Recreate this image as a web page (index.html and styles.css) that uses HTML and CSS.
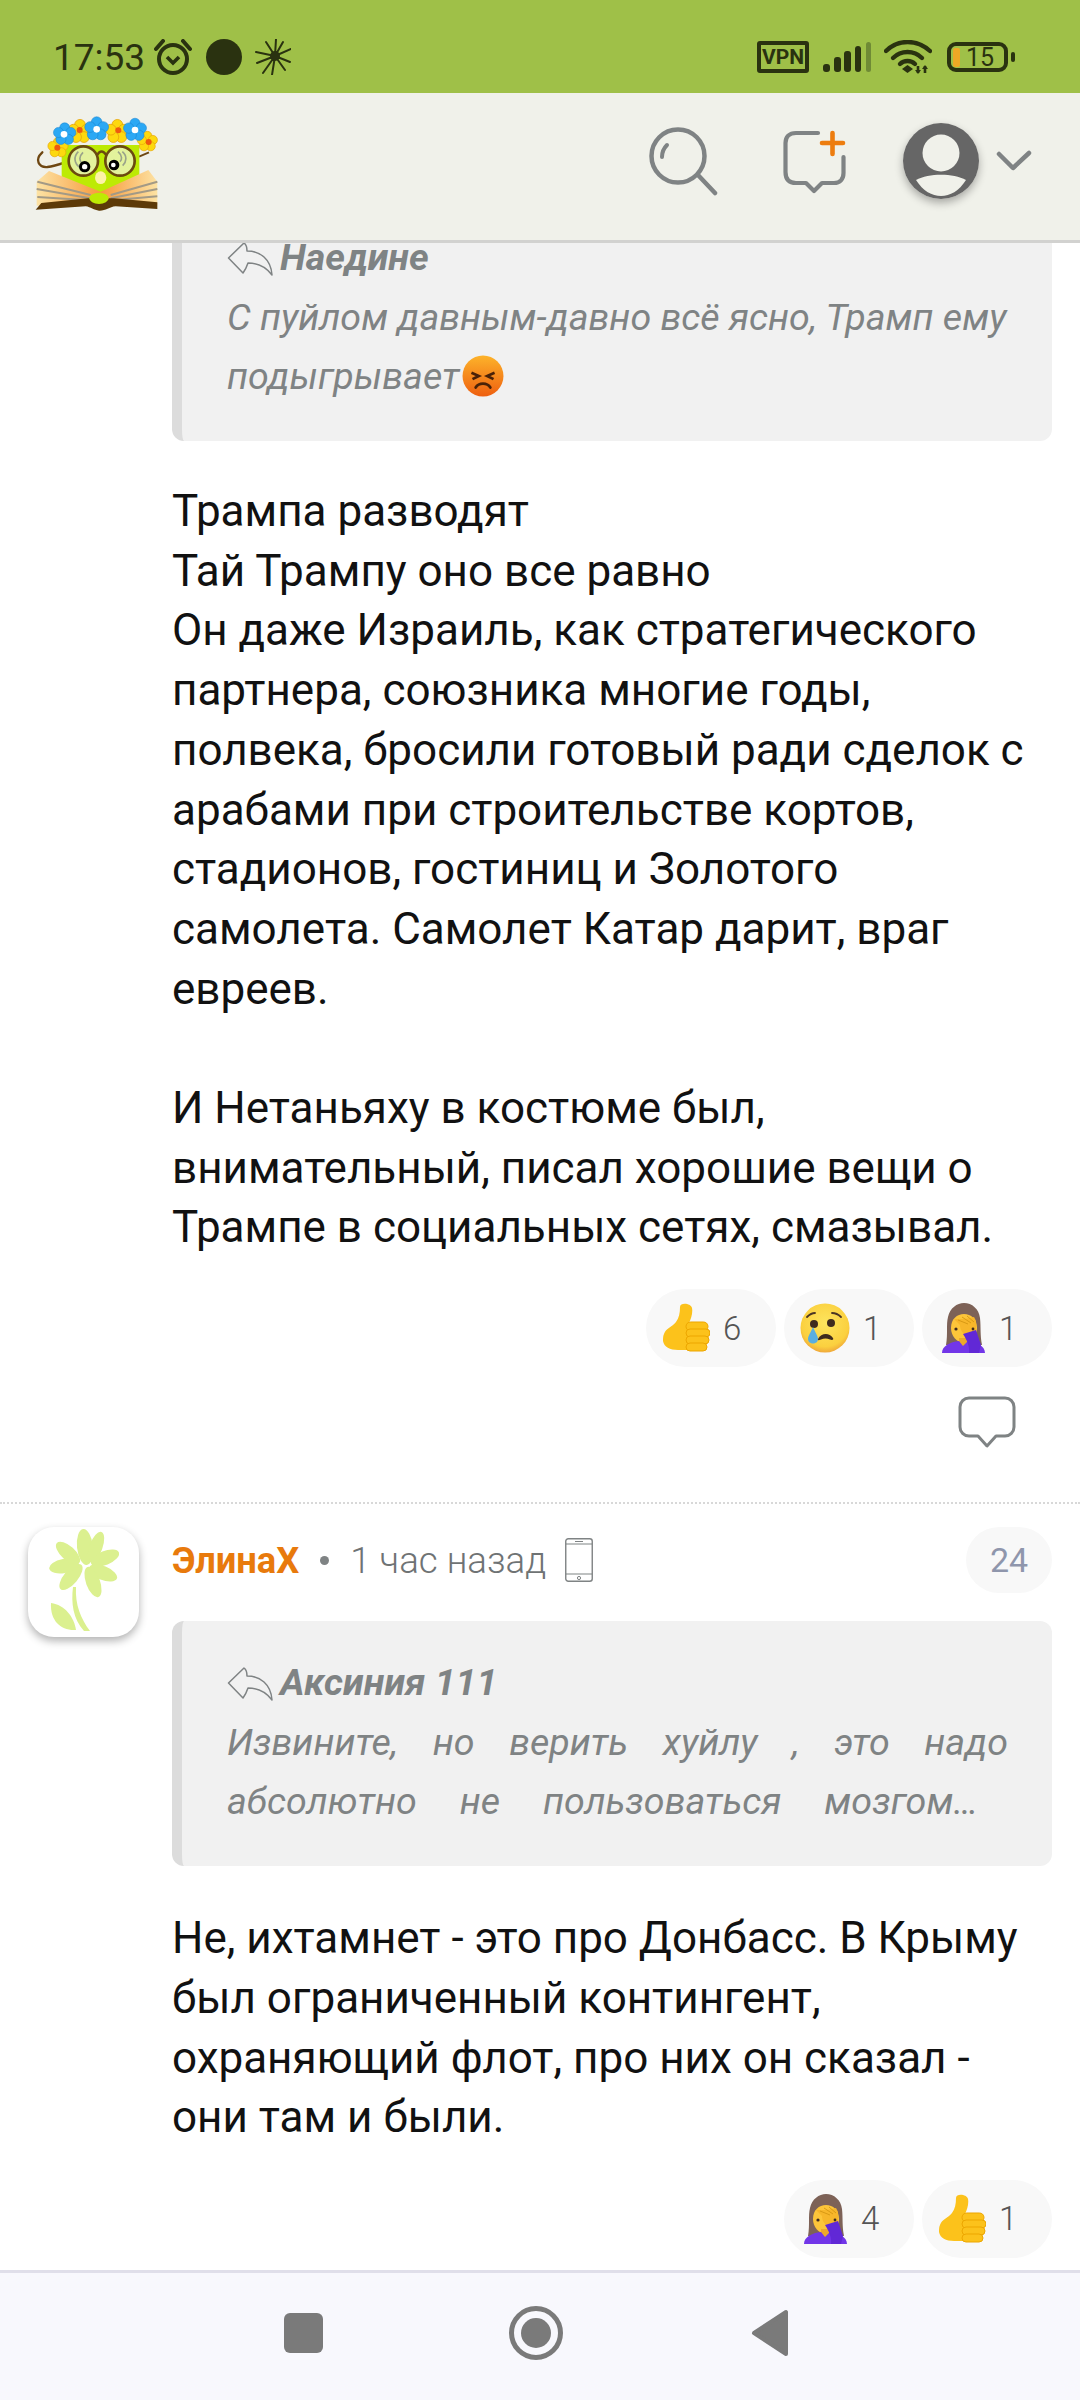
FILE: index.html
```html
<!DOCTYPE html>
<html lang="ru">
<head>
    <meta charset="UTF-8">
    <meta name="viewport" content="width=device-width, initial-scale=1.0">
    <title>Комментарии</title>
    <link rel="stylesheet" href="styles.css">
</head>
<body>
    <svg class="defs" aria-hidden="true">
        <defs>
            <radialGradient id="faceGrad" cx="50%" cy="40%" r="60%">
                <stop offset="0" stop-color="#fde55e"/>
                <stop offset="0.8" stop-color="#fbd03f"/>
                <stop offset="1" stop-color="#f0a93a"/>
            </radialGradient>
            <linearGradient id="angryGrad" x1="0" y1="0" x2="0" y2="1">
                <stop offset="0" stop-color="#fdb32a"/>
                <stop offset="1" stop-color="#ee5f10"/>
            </linearGradient>
            <linearGradient id="pageLeft" x1="0" y1="0" x2="1" y2="0">
                <stop offset="0" stop-color="#fde3a4"/>
                <stop offset="1" stop-color="#f79a3c"/>
            </linearGradient>
            <linearGradient id="pageRight" x1="1" y1="0" x2="0" y2="0">
                <stop offset="0" stop-color="#fde3a4"/>
                <stop offset="1" stop-color="#f79a3c"/>
            </linearGradient>
            <g id="petals">
                <circle cx="0" cy="-24" r="19"/>
                <circle cx="23" cy="-7" r="19"/>
                <circle cx="14" cy="19" r="19"/>
                <circle cx="-14" cy="19" r="19"/>
                <circle cx="-23" cy="-7" r="19"/>
            </g>
            <symbol id="replyIcon" viewBox="0 0 46 34">
                <path d="M1.500 16 L17 1 C20 3 20 6 20 9 C33 9 44 17 45 33 C39 25 31 21 21 21 C20 24 19 27 16 31 Z" fill="none" stroke="#7f8384" stroke-width="1.500" stroke-linejoin="round"/>
            </symbol>
            <symbol id="thumb" viewBox="0 0 48 50">
                <path d="M2 31 C4 25 10 24 14 19 C17 15 18 10 18 4 C18 -1 29 0 30 5 C31 10 29 16 27 20 L32 47 H16 C8 47 2 44 1 38 C1 35 1 33 2 31Z" fill="#fcc21b"/>
                <rect x="24" y="19" width="22" height="9" rx="4.500" fill="#fcc21b" stroke="#eda600" stroke-width="1"/>
                <rect x="24" y="26" width="24" height="8" rx="4" fill="#fcc21b" stroke="#eda600" stroke-width="1"/>
                <rect x="24" y="33" width="23" height="8" rx="4" fill="#fcc21b" stroke="#eda600" stroke-width="1"/>
                <rect x="24" y="40" width="21" height="8" rx="4" fill="#fcc21b" stroke="#eda600" stroke-width="1"/>
            </symbol>
            <symbol id="cry" viewBox="0 0 50 50">
                <circle cx="25" cy="25" r="24.500" fill="url(#faceGrad)"/>
                <circle cx="14" cy="21" r="4" fill="#3f2b1e"/>
                <circle cx="31" cy="20" r="4" fill="#3f2b1e"/>
                <path d="M7 14 C9 12 12 10 15 10 M32 10 C35 10 38 11 41 14" stroke="#4a3524" stroke-width="1.800" fill="none" stroke-linecap="round"/>
                <path d="M18 36 C21 30 29 29 33 35 C34 37 32 37.500 30 36.500 C27 35 24 35 21 36.500 C19 37.500 17 37.500 18 36Z" fill="#3f2b1e"/>
                <path d="M13 24 C11 29 8 33 8 36 C8 42 18 42 18 36 C18 33 15 29 13 24Z" fill="#5aaee0"/>
            </symbol>
            <symbol id="palm" viewBox="0 0 48 50">
                <path d="M8 42 C10 30 8 22 10 14 C12 5 19 0 26 0 C34 0 41 6 42 15 C43 24 42 32 44 42Z" fill="#7d6257"/>
                <path d="M13 25 C13 16 19 11 26 11 C33 11 39 16 39 25 C39 33 33 40 26 40 C19 40 13 33 13 25Z" fill="#fcc53a"/>
                <rect x="21" y="35" width="8" height="11" fill="#eda92b"/>
                <path d="M4 50 C4 43 12 39 21 38 L25 43 L30 38 C39 39 47 43 47 50Z" fill="#7236e8"/>
                <path d="M16 16 L27 16 L36 14 L38 18 L38 28 L28 32 C24 30 22 26 22 22Z" fill="#f7b62a"/>
                <path d="M20 17 L30 21 M24 14 L33 20 M29 13 L36 19" stroke="#d99a14" stroke-width="1" fill="none"/>
                <circle cx="18" cy="26" r="1.600" fill="#3f2b1e"/>
                <circle cx="35" cy="26" r="1.400" fill="#3f2b1e"/>
                <path d="M25 31 L38 27 L43 42 L41 50 L31 50 C32 44 29 37 25 31Z" fill="#6128d6"/>
            </symbol>
        </defs>
    </svg>

    <div class="screen">
        <div class="status-bar">
            <div class="status-group">
                <span class="clock">17:53</span>
                <svg class="st-alarm" width="40" height="36" viewBox="0 0 40 36">
                    <circle cx="20" cy="20" r="14" fill="none" stroke="#2a3210" stroke-width="4"/>
                    <path d="M14 18 L20 24 L26 18" fill="none" stroke="#2a3210" stroke-width="3.600"/>
                    <path d="M3 10 L10 2 M37 10 L30 2" stroke="#2a3210" stroke-width="4" stroke-linecap="round"/>
                </svg>
                <span class="st-dot"></span>
                <svg class="st-star" width="36" height="36" viewBox="0 0 36 36">
                    <g stroke="#2a3210" stroke-width="2" stroke-linecap="round">
                        <path d="M20 17 L21 0 M20 17 L17 36 M20 17 L36 10 M20 17 L35 23 M20 17 L28 3 M20 17 L30 31 M20 17 L11 3 M20 17 L1 13 M20 17 L2 24 M20 17 L8 34"/>
                    </g>
                    <circle cx="20" cy="17" r="5" fill="#2a3210"/>
                </svg>
            </div>
            <div class="status-group status-right">
                <span class="st-vpn">VPN</span>
                <svg class="st-signal" width="48" height="30" viewBox="0 0 48 30">
                    <rect x="0" y="22" width="7" height="8" rx="3" fill="#2a3210"/>
                    <rect x="11" y="15" width="7" height="15" rx="3" fill="#2a3210"/>
                    <rect x="21" y="9" width="7" height="21" rx="3" fill="#2a3210"/>
                    <rect x="32" y="4" width="6" height="26" rx="3" fill="#2a3210"/>
                    <rect x="43" y="0" width="5" height="30" rx="2.500" fill="#6f8a35"/>
                </svg>
                <svg class="st-wifi" width="48" height="34" viewBox="0 0 48 34">
                    <g fill="none" stroke="#2a3210" stroke-width="4.400" stroke-linecap="round">
                        <path d="M2 11 C14 -1 33 -1 46 11"/>
                        <path d="M9 18 C17 10 30 10 38 18"/>
                        <path d="M16 24 C20 20 27 20 31 24"/>
                    </g>
                    <path d="M18 29 L23.500 25 L29 29 L23.500 33Z" fill="#2a3210"/>
                    <path d="M34 26 V33 M41 33 V26" stroke="#2a3210" stroke-width="2.600"/>
                    <path d="M31 30 L34 34 L37 30Z M38 29 L41 25 L44 29Z" fill="#2a3210"/>
                </svg>
                <div class="st-battery">
                    <span class="st-level"></span>
                    <span class="st-pct">15</span>
                </div>
                <span class="st-nub"></span>
            </div>
        </div>

        <header class="topbar">
            <svg class="logo" width="125" height="96" viewBox="100 70 375 288">
                <path d="M215 205 C190 212 170 222 140 226 C115 228 100 205 125 182" fill="none" stroke="#6e4712" stroke-width="7" stroke-linecap="round"/>
                <path d="M415 195 L445 182" stroke="#6e4712" stroke-width="6"/>
                <path d="M183 160 H416 V255 L300 305 L183 255Z" fill="#bdea04"/>
                <circle cx="248" cy="208" r="44" fill="#e3f29c" stroke="#6b4a10" stroke-width="8"/>
                <circle cx="358" cy="208" r="44" fill="#e3f29c" stroke="#6b4a10" stroke-width="8"/>
                <path d="M290 190 C297 176 308 176 316 190" fill="none" stroke="#6b4a10" stroke-width="7"/>
                <path d="M233 180 C218 195 220 215 238 228 M247 182 C234 195 236 208 244 214 M365 180 C380 192 378 210 366 222 M352 180 C366 192 364 205 358 210" fill="none" stroke="#9aa38a" stroke-width="5"/>
                <circle cx="252" cy="225" r="17" fill="#000"/>
                <circle cx="252" cy="225" r="8" fill="#fff"/>
                <circle cx="340" cy="220" r="16" fill="#000"/>
                <circle cx="338" cy="220" r="7" fill="#fff"/>
                <ellipse cx="300" cy="258" rx="17" ry="19" fill="#fdf2a8"/>
                <path d="M300 300 L145 238 L108 270 L108 342 L300 335Z" fill="url(#pageLeft)"/>
                <path d="M300 300 L443 235 L470 270 L470 340 L300 335Z" fill="url(#pageRight)"/>
                <path d="M110 270 L270 310 M108 292 L268 320 M110 316 L265 326 M470 270 L330 310 M470 292 L330 320 M470 314 L335 326" stroke="#a39a86" stroke-width="6" fill="none"/>
                <path d="M105 354 L122 334 L262 320 L340 320 L470 332 L470 352 L345 344 C325 346 315 358 295 357 C280 356 270 346 255 344Z" fill="#5d3a08"/>
                <ellipse cx="295" cy="320" rx="29" ry="17" fill="#bdea04"/>
                <use href="#petals" fill="#fdd90f" stroke="#e8a80c" stroke-width="3" transform="translate(172 168) scale(.72)"/>
                <use href="#petals" fill="#fdd90f" stroke="#e8a80c" stroke-width="3" transform="translate(440 150) scale(.72)"/>
                <use href="#petals" fill="#fdd90f" stroke="#e8a80c" stroke-width="3" transform="translate(238 120) scale(.85)"/>
                <use href="#petals" fill="#fdd90f" stroke="#e8a80c" stroke-width="3" transform="translate(350 120) scale(.85)"/>
                <circle cx="170" cy="168" r="9" fill="#ee5a0e"/>
                <circle cx="444" cy="151" r="9" fill="#ee5a0e"/>
                <circle cx="237" cy="115" r="9" fill="#ee5a0e"/>
                <circle cx="353" cy="116" r="9" fill="#ee5a0e"/>
                <use href="#petals" fill="#2ba8f4" stroke="#1a84d0" stroke-width="2" transform="translate(192 128) scale(.8)"/>
                <use href="#petals" fill="#2ba8f4" stroke="#1a84d0" stroke-width="2" transform="translate(288 112) scale(.85)"/>
                <use href="#petals" fill="#2ba8f4" stroke="#1a84d0" stroke-width="2" transform="translate(403 115) scale(.82)"/>
                <circle cx="190" cy="128" r="10" fill="#fff"/>
                <circle cx="288" cy="113" r="10" fill="#fff"/>
                <circle cx="403" cy="115" r="10" fill="#fff"/>
            </svg>
            <div class="topbar-actions">
                <svg class="ico-search" width="70" height="90" viewBox="648 122 70 90">
                    <circle cx="678" cy="158" r="26.500" fill="none" stroke="#7f8384" stroke-width="4.500"/>
                    <path d="M698 177 L715 195" stroke="#7f8384" stroke-width="4.500" stroke-linecap="round"/>
                    <path d="M667 147 C664 150 662 154 662 159" stroke="#7f8384" stroke-width="4" stroke-linecap="round" fill="none"/>
                </svg>
                <svg class="ico-new" width="70" height="90" viewBox="780 122 70 90">
                    <path d="M818 135 H796 C789 135 785.500 139 785.500 145 V174 C785.500 181 789 185 796 185 H806 L814 193 L822 185 H834 C840 185 843.500 181 843.500 175 V159" fill="none" stroke="#7f8384" stroke-width="4.200" stroke-linecap="round" stroke-linejoin="round"/>
                    <path d="M822 145 H843 M832.500 135 V156" stroke="#ed7d0f" stroke-width="4.600" stroke-linecap="round"/>
                </svg>
                <div class="user-pic">
                    <svg width="76" height="76" viewBox="0 0 76 76">
                        <circle cx="38" cy="38" r="38" fill="#666"/>
                        <circle cx="38" cy="30" r="18.500" fill="#f0f1ea"/>
                        <path d="M13 57 C26 50 50 50 63 57 C56 68 47 73 38 73 C29 73 20 68 13 57Z" fill="#f0f1ea"/>
                    </svg>
                </div>
                <svg class="ico-chev" width="36" height="90" viewBox="996 122 36 90">
                    <path d="M999 156 L1013 170 L1029 155" fill="none" stroke="#7f8384" stroke-width="4.500" stroke-linecap="round" stroke-linejoin="round"/>
                </svg>
            </div>
        </header>

        <main class="viewport">
            <div class="feed">
                <section class="comment">
                    <div class="comment-side"></div>
                    <div class="comment-main">
                        <blockquote class="quote">
                            <div class="quote-author"><svg class="reply" width="46" height="34"><use href="#replyIcon"/></svg>Наедине</div>
                            <p class="quote-text">С пуйлом давным-давно всё ясно, Трамп ему<br>подыгрывает<svg class="angry" width="42" height="42" viewBox="0 0 40 40"><circle cx="20" cy="20" r="19.500" fill="url(#angryGrad)"/><path d="M9 17 L16 20 L10 23 M31 17 L24 20 L30 23" fill="none" stroke="#4a2208" stroke-width="2.600"/><path d="M13 31 C16 26 24 26 27 31" fill="none" stroke="#4a2208" stroke-width="2.600" stroke-linecap="round"/></svg></p>
                        </blockquote>
                        <div class="comment-text">
                            Трампа разводят<br>
                            Тай Трампу оно все равно<br>
                            Он даже Израиль, как стратегического<br>
                            партнера, союзника многие годы,<br>
                            полвека, бросили готовый ради сделок с<br>
                            арабами при строительстве кортов,<br>
                            стадионов, гостиниц и Золотого<br>
                            самолета. Самолет Катар дарит, враг<br>
                            евреев.<br>
                            <br>
                            И Нетаньяху в костюме был,<br>
                            внимательный, писал хорошие вещи о<br>
                            Трампе в социальных сетях, смазывал.
                        </div>
                        <div class="reactions">
                            <span class="reaction"><svg width="48" height="50"><use href="#thumb"/></svg>6</span>
                            <span class="reaction"><svg width="50" height="50"><use href="#cry"/></svg>1</span>
                            <span class="reaction"><svg width="48" height="50"><use href="#palm"/></svg>1</span>
                        </div>
                        <div class="comment-tools">
                            <svg width="58" height="52" viewBox="0 0 58 52">
                                <path d="M11 2 H47 C52 2 56 6 56 11 V31 C56 36 52 40 47 40 H38 L29 50 L20 40 H11 C6 40 2 36 2 31 V11 C2 6 6 2 11 2Z" fill="none" stroke="#7f8384" stroke-width="3" stroke-linejoin="round"/>
                            </svg>
                        </div>
                    </div>
                </section>

                <section class="comment comment-next">
                    <div class="comment-side">
                        <div class="avatar">
                            <svg width="70" height="104" viewBox="0 0 70 104">
                                <g fill="#dbf08f">
                                    <ellipse cx="36" cy="20" rx="8" ry="18" transform="rotate(-6 36 20)"/>
                                    <ellipse cx="47" cy="20" rx="6.500" ry="16" transform="rotate(20 47 20)"/>
                                    <ellipse cx="56" cy="31" rx="7" ry="15" transform="rotate(68 56 31)"/>
                                    <ellipse cx="54" cy="46" rx="7" ry="15" transform="rotate(112 54 46)"/>
                                    <ellipse cx="44" cy="55" rx="7" ry="16" transform="rotate(160 44 55)"/>
                                    <ellipse cx="22" cy="50" rx="7" ry="16" transform="rotate(-140 22 50)"/>
                                    <ellipse cx="15" cy="39" rx="7" ry="15" transform="rotate(-100 15 39)"/>
                                    <ellipse cx="19" cy="26" rx="7" ry="15" transform="rotate(-48 19 26)"/>
                                </g>
                                <path d="M27 60 C26 78 32 92 41 104 H35 C24 92 22 76 24 60Z" fill="#dbf08f"/>
                                <path d="M2 76 C16 78 25 90 27 103 C12 104 1 94 2 76Z" fill="#dbf08f"/>
                            </svg>
                        </div>
                    </div>
                    <div class="comment-main">
                        <div class="comment-head">
                            <span class="author">ЭлинаХ</span>
                            <span class="sep"></span>
                            <span class="time">1 час назад</span>
                            <svg class="device" width="28" height="44" viewBox="0 0 28 44">
                                <rect x="0.750" y="0.750" width="26.500" height="42.500" rx="2.500" fill="none" stroke="#7f8384" stroke-width="1.400"/>
                                <path d="M1 6 H27 M1 36 H27 M10 3.500 H18" stroke="#7f8384" stroke-width="1.200"/>
                                <circle cx="14" cy="40" r="1.600" fill="none" stroke="#7f8384" stroke-width="1"/>
                            </svg>
                            <span class="rating">24</span>
                        </div>
                        <blockquote class="quote">
                            <div class="quote-author"><svg class="reply" width="46" height="34"><use href="#replyIcon"/></svg>Аксиния 111</div>
                            <p class="quote-text">
                                <span class="quote-line">Извините, но верить хуйлу , это надо</span>
                                <span class="quote-line quote-line-cut">абсолютно не пользоваться мозгом…</span>
                            </p>
                        </blockquote>
                        <div class="comment-text">
                            Не, ихтамнет - это про Донбасс. В Крыму<br>
                            был ограниченный контингент,<br>
                            охраняющий флот, про них он сказал -<br>
                            они там и были.
                        </div>
                        <div class="reactions">
                            <span class="reaction"><svg width="48" height="50"><use href="#palm"/></svg>4</span>
                            <span class="reaction"><svg width="48" height="50"><use href="#thumb"/></svg>1</span>
                        </div>
                    </div>
                </section>
            </div>
        </main>

        <nav class="nav-bar">
            <span class="nav-stop"></span>
            <span class="nav-home"></span>
            <svg class="nav-back" width="38" height="48" viewBox="0 0 38 48">
                <path d="M35 3 V45 L3 24Z" fill="#7a7a7a" stroke="#7a7a7a" stroke-width="4" stroke-linejoin="round"/>
            </svg>
        </nav>
    </div>
</body>
</html>
```

FILE: styles.css
```css
* {
    box-sizing: border-box;
}

html, body {
    margin: 0;
    height: 2400px;
    overflow: hidden;
}

body {
    font-family: Roboto, "Noto Sans", sans-serif;
    background-color: #fff;
    color: #111;
}

.defs {
    position: absolute;
    width: 0;
    height: 0;
}

.screen {
    display: flex;
    flex-direction: column;
    height: 2400px;
}

/* status bar */
.status-bar {
    flex: 0 0 93px;
    display: flex;
    justify-content: space-between;
    align-items: center;
    padding: 21px 65px 0 53px;
    background-color: #9fc048;
    color: #2a3210;
}

.status-group {
    display: flex;
    align-items: center;
}

.clock {
    font-size: 37px;
    margin-right: 8px;
}

.st-dot {
    width: 36px;
    height: 36px;
    border-radius: 50%;
    background-color: #2a3210;
    margin: 0 13px;
}

.st-vpn {
    width: 52px;
    height: 32px;
    border: 4px solid #2a3210;
    border-radius: 3px;
    font-size: 21px;
    font-weight: 700;
    line-height: 24px;
    text-align: center;
}

.st-signal {
    margin-left: 14px;
}

.st-wifi {
    margin-left: 13px;
}

.st-battery {
    width: 61px;
    height: 30px;
    margin-left: 15px;
    border: 4px solid #2a3210;
    border-radius: 9px;
    display: flex;
    align-items: center;
    padding-left: 2px;
}

.st-level {
    width: 7px;
    height: 19px;
    border-radius: 2px;
    background-color: #eea825;
}

.st-pct {
    font-size: 25px;
    margin-left: 6px;
}

.st-nub {
    width: 4px;
    height: 10px;
    margin-left: 3px;
    border-radius: 2px;
    background-color: #2a3210;
}

/* top bar */
.topbar {
    flex: 0 0 150px;
    display: flex;
    justify-content: space-between;
    align-items: center;
    padding: 0 48px 3px 34px;
    background-color: #f0f1ea;
    border-bottom: 3px solid #d2d2d0;
}

.logo {
    margin-top: -5px;
}

.topbar-actions {
    display: flex;
    align-items: center;
}

.ico-new {
    margin-left: 62px;
}

.user-pic {
    width: 76px;
    height: 76px;
    margin: 0 0 0 53px;
    border-radius: 50%;
    box-shadow: 0 4px 8px rgba(0, 0, 0, 0.3);
    position: relative;
    top: -4px;
}

.user-pic svg {
    display: block;
}

.ico-chev {
    margin-left: 17px;
}

/* comments */
.viewport {
    flex: 1;
    overflow: hidden;
}

.feed {
    margin-top: -47px;
}

.comment {
    display: flex;
    padding: 0 28px;
}

.comment-next {
    border-top: 2px dotted #d8d8d8;
    margin-top: 54px;
    padding-top: 23px;
}

.comment-side {
    flex: 0 0 144px;
}

.comment-main {
    flex: 1;
    min-width: 0;
}

.avatar {
    width: 111px;
    height: 110px;
    background-color: #fff;
    border-radius: 26px;
    box-shadow: 0 4px 8px rgba(0, 0, 0, 0.3);
    display: flex;
    align-items: flex-end;
    justify-content: center;
    padding-bottom: 6px;
}

.comment-head {
    display: flex;
    align-items: center;
    height: 66px;
    margin-bottom: 28px;
}

.author {
    font-size: 36.3px;
    font-weight: 700;
    color: #e87a0c;
}

.sep {
    width: 9px;
    height: 9px;
    border-radius: 50%;
    background-color: #7f8384;
    margin: 0 21px 0 21px;
}

.time {
    font-size: 36.7px;
    font-weight: 300;
    color: #6f7374;
}

.device {
    margin-left: 19px;
}

.rating {
    margin-left: auto;
    width: 86px;
    height: 66px;
    border-radius: 33px;
    background-color: #f8f8f8;
    color: #8f96ac;
    font-size: 34px;
    line-height: 66px;
    text-align: center;
}

.quote {
    margin: 0;
    padding: 47px 44px 35px 45px;
    background-color: #f1f1f1;
    border-left: 10px solid #dcdcdc;
    border-radius: 12px;
    color: #7f8384;
    font-style: italic;
    font-size: 37.6px;
    line-height: 59px;
}

.quote-author {
    display: flex;
    align-items: center;
    height: 28px;
    margin-bottom: 17px;
    font-weight: 700;
}

.reply {
    flex: none;
    margin: 4px 7px 0 0;
}

.quote-text {
    margin: 0;
    font-weight: 400;
    white-space: nowrap;
}

.quote-line {
    display: block;
    white-space: normal;
    text-align: justify;
    text-align-last: justify;
}

.quote-line-cut {
    margin-right: 30px;
}

.angry {
    vertical-align: -8px;
    margin-left: 2px;
}

.comment-text {
    margin-top: 41px;
    font-size: 44px;
    line-height: 59.7px;
    white-space: nowrap;
}

.comment-next .comment-text {
    margin-top: 43px;
}

.reactions {
    display: flex;
    justify-content: flex-end;
    gap: 8px;
    margin-top: 31px;
}

.comment-next .reactions {
    margin-top: 32px;
}

.reaction {
    width: 130px;
    height: 78px;
    border-radius: 39px;
    background-color: #f8f8f8;
    display: flex;
    align-items: center;
    padding-left: 16px;
    gap: 13px;
    font-size: 33px;
    font-weight: 300;
    color: #555;
}

.comment-tools {
    display: flex;
    justify-content: flex-end;
    margin-top: 29px;
    padding-right: 36px;
}

.comment-tools svg {
    display: block;
}

/* android nav */
.nav-bar {
    flex: 0 0 130px;
    display: flex;
    align-items: center;
    background-color: #f8f8fd;
    border-top: 3px solid #e0dfea;
    padding: 0 0 8px 284px;
}

.nav-stop {
    width: 39px;
    height: 40px;
    border-radius: 6px;
    background-color: #7a7a7a;
}

.nav-home {
    width: 54px;
    height: 54px;
    margin-left: 186px;
    border: 5px solid #7a7a7a;
    border-radius: 50%;
    display: flex;
    align-items: center;
    justify-content: center;
}

.nav-home::before {
    content: "";
    width: 30px;
    height: 30px;
    border-radius: 50%;
    background-color: #7a7a7a;
}

.nav-back {
    margin-left: 188px;
}
```
